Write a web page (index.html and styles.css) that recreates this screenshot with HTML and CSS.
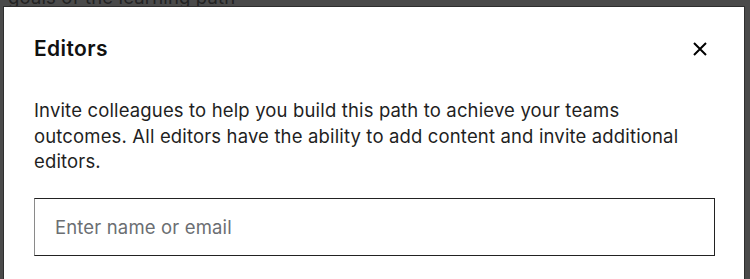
FILE: index.html
```html
<!DOCTYPE html>
<html lang="en">
<head>
    <meta charset="UTF-8">
    <meta name="viewport" content="width=device-width, initial-scale=1.0">
    <title>Editors</title>
    <link rel="stylesheet" href="styles.css">
</head>
<body>

<div class="page_behind">
    <p class="behind_text">goals of the learning path</p>
</div>

<!-- Editors modal -->
<div class="modal" role="dialog" aria-labelledby="modal_title">
    <div class="modal_header">
        <h2 id="modal_title" class="modal_title">Editors</h2>
        <button class="close_btn" type="button" aria-label="Close">
            <svg width="16" height="16" viewBox="0 0 16 16">
                <path d="M2 2 L14 14 M14 2 L2 14" stroke="#000" stroke-width="2" fill="none"/>
            </svg>
        </button>
    </div>
    <p class="modal_text">Invite colleagues to help you build this path to achieve your teams outcomes. All editors have the ability to add content and invite additional editors.</p>
    <input class="modal_input" type="text" placeholder="Enter name or email">
</div>

</body>
</html>
```

FILE: styles.css
```css
html, body {
    margin: 0;
    height: 100%;
    overflow: hidden;
}

body {
    background: #4a4a4a;
    font-family: Inter, "Noto Sans", sans-serif;
    letter-spacing: 0.15px;
    position: relative;
}

.page_behind {
    padding-left: 8px;
    margin-top: -15px;
}

.behind_text {
    margin: 0;
    font-size: 18.5px;
    line-height: 24px;
    color: #222;
}

/* The modal lies over the page */
.modal {
    position: absolute;
    top: 6px;
    left: 3px;
    right: 5px;
    bottom: -40px;
    background: #fff;
    border: 1px solid #2e2e2e;
    padding: 30px 29px 0 30px;
}

.modal_header {
    display: flex;
    align-items: center;
    justify-content: space-between;
}

.modal_title {
    margin: 0;
    font-size: 21px;
    line-height: 24px;
    font-weight: 600;
    letter-spacing: 0.4px;
    color: #111;
}

.close_btn {
    border: none;
    background: none;
    padding: 0;
    margin-right: 7px;
    width: 16px;
    height: 16px;
    cursor: pointer;
}

.close_btn svg {
    display: block;
}

.modal_text {
    max-width: 662px;
    margin: 37px 0 23px;
    font-size: 18.5px;
    line-height: 25.5px;
    color: #1f1f1f;
}

.modal_input {
    display: block;
    box-sizing: border-box;
    width: 100%;
    height: 58px;
    margin: 0;
    padding: 0 20px;
    border: 1px solid #222;
    border-left-color: #8a8a8a;
    border-radius: 0;
    font-family: inherit;
    font-size: 18.5px;
    letter-spacing: 0.15px;
    color: #222;
    outline: none;
}

.modal_input::placeholder {
    color: #6b6e72;
}
```
